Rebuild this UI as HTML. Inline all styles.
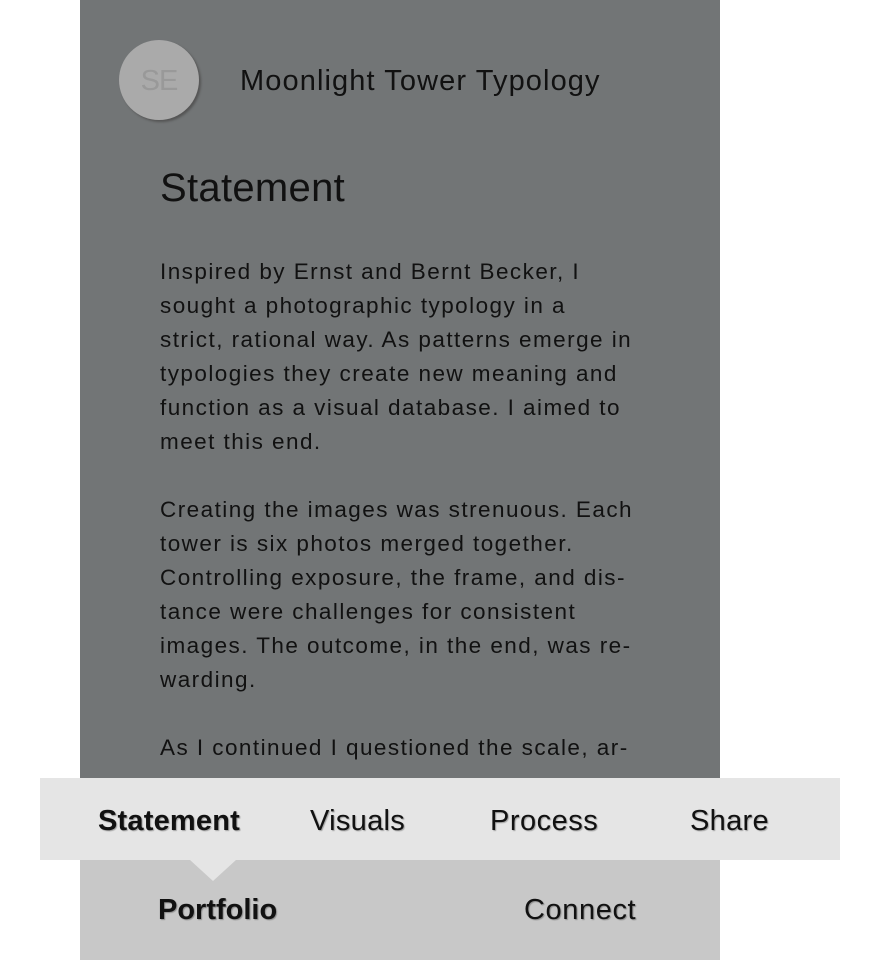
<!DOCTYPE html>
<html><head><style>
body{margin:0;width:880px;height:960px;background:#fff;position:relative;overflow:hidden;font-family:"Liberation Sans",Helvetica,sans-serif;}
.main{position:absolute;left:80px;top:0;width:640px;height:960px;background:#727576;}
.av{position:absolute;left:119px;top:40px;width:80px;height:80px;border-radius:50%;background:#aaaaaa;box-shadow:2px 2px 2px #555;color:#999;font-size:29px;line-height:82px;text-align:center;letter-spacing:-1px;}
.ttl{position:absolute;left:240px;top:65px;font-size:29px;color:#111;letter-spacing:1.1px;}
h1{position:absolute;left:160px;top:166px;margin:0;font-weight:normal;font-size:40px;color:#111;letter-spacing:0.3px;}
.body{position:absolute;left:160px;top:255px;font-size:22.5px;line-height:34px;color:#111;white-space:nowrap;letter-spacing:1.45px;}
.menu{position:absolute;left:40px;top:778px;width:800px;height:82px;background:#e5e5e5;}
.bot{position:absolute;left:80px;top:860px;width:640px;height:100px;background:#c8c8c8;}
.tri{position:absolute;left:190px;top:860px;width:0;height:0;border-left:23px solid transparent;border-right:23px solid transparent;border-top:21px solid #e5e5e5;}
.m{position:absolute;font-size:29px;color:#111;text-shadow:1px 1px 1px rgba(0,0,0,.3);}
</style></head><body>
<div class="main"></div>
<div class="av">SE</div>
<div class="ttl">Moonlight Tower Typology</div>
<h1>Statement</h1>
<div class="body">Inspired by Ernst and Bernt Becker, I<br>sought a photographic typology in a<br>strict, rational way. As patterns emerge in<br>typologies they create new meaning and<br>function as a visual database. I aimed to<br>meet this end.<br><br>Creating the images was strenuous. Each<br>tower is six photos merged together.<br>Controlling exposure, the frame, and dis-<br>tance were challenges for consistent<br>images. The outcome, in the end, was re-<br>warding.<br><br>As I continued I questioned the scale, ar-</div>
<div class="menu"></div>
<div class="bot"></div>
<div class="tri"></div>
<div class="m" style="left:98px;top:805px;font-weight:bold;letter-spacing:0.2px">Statement</div>
<div class="m" style="left:310px;top:805px;letter-spacing:0.3px">Visuals</div>
<div class="m" style="left:490px;top:805px;letter-spacing:0.5px">Process</div>
<div class="m" style="left:690px;top:805px;letter-spacing:0.3px">Share</div>
<div class="m" style="left:158px;top:894px;font-weight:bold">Portfolio</div>
<div class="m" style="left:524px;top:894px;letter-spacing:0.6px">Connect</div>
</body></html>
